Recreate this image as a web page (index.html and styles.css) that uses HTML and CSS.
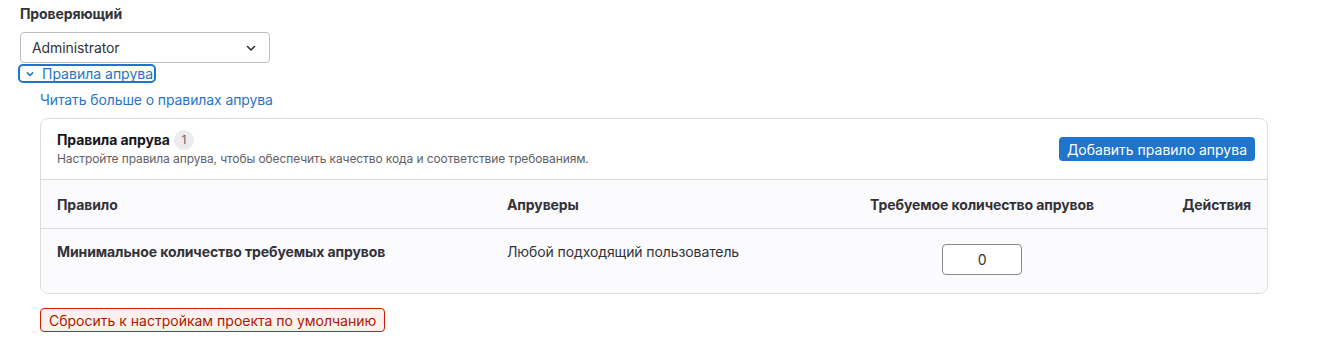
FILE: index.html
```html
<!DOCTYPE html>
<html lang="ru">
<head>
<meta charset="utf-8">
<link rel="stylesheet" href="styles.css">
</head>
<body>
<div class="page">
  <div class="field-label">Проверяющий</div>
  <div class="select">
    <span>Administrator</span>
    <svg class="sel-chev" width="16" height="16" viewBox="0 0 16 16"><path d="M4.5 6.5 8 10l3.5-3.5" fill="none" stroke="#333238" stroke-width="1.6" stroke-linecap="round" stroke-linejoin="round"/></svg>
  </div>
  <button class="toggle">
    <svg width="12" height="12" viewBox="0 0 16 16"><path d="M4.5 6.5 8 10l3.5-3.5" fill="none" stroke="#1f75cb" stroke-width="2" stroke-linecap="round" stroke-linejoin="round"/></svg>
    <span>Правила апрува</span>
  </button>
  <div class="section">
    <a class="more" href="#">Читать больше о правилах апрува</a>
    <div class="card">
      <div class="card-head">
        <div>
          <div class="title">Правила апрува <span class="badge">1</span></div>
          <div class="desc">Настройте правила апрува, чтобы обеспечить качество кода и соответствие требованиям.</div>
        </div>
        <button class="btn-primary">Добавить правило апрува</button>
      </div>
      <div class="grid head-row">
        <div class="c1">Правило</div>
        <div class="c2">Апруверы</div>
        <div class="c3">Требуемое количество апрувов</div>
        <div class="c4">Действия</div>
      </div>
      <div class="grid body-row">
        <div class="c1 strong">Минимальное количество требуемых апрувов</div>
        <div class="c2">Любой подходящий пользователь</div>
        <div class="c3"><div class="num">0</div></div>
        <div class="c4"></div>
      </div>
    </div>
    <button class="btn-reset">Сбросить к настройкам проекта по умолчанию</button>
  </div>
</div>
</body>
</html>
```
FILE: styles.css
```css
* { box-sizing: border-box; }
body {
  margin: 0;
  background: #fff;
  font-family: Inter, "Noto Sans", sans-serif;
  font-size: 14px;
  color: #333238;
  letter-spacing: -0.1px;
}
.page { padding: 4px 20px 0; width: 1288px; }
.field-label { font-weight: 700; line-height: 20px; margin-bottom: 8px; color: #333238; }
.select {
  width: 250px; height: 31px;
  border: 1px solid #bfbfc3; border-radius: 4px;
  display: flex; align-items: center; justify-content: space-between;
  padding: 0 10px 0 11px;
}
.toggle {
  margin: 1px 0 0 -2px;
  display: inline-flex; align-items: center; gap: 6px;
  height: 19px; padding: 0 1px 0 4px;
  border: 2px solid #1f75cb; border-radius: 5px;
  background: #fff; color: #1f75cb;
  font: inherit; font-size: 14px; line-height: 14px;
  vertical-align: top;
}
.section { padding-left: 20px; }
.more { display: block; color: #1f75cb; text-decoration: none; line-height: 20px; margin-top: 7px; margin-bottom: 8px; }
.card { border: 1px solid #dcdcde; border-radius: 8px; overflow: hidden; }
.card-head {
  height: 61px; display: flex; align-items: center; justify-content: space-between;
  padding: 0 12px 0 16px; border-bottom: 1px solid #dcdcde;
}
.title { font-weight: 700; color: #18171d; line-height: 20px; display: flex; align-items: center; gap: 4px; }
.badge {
  display: inline-flex; width: 20px; height: 20px; border-radius: 10px;
  background: #ececef; color: #626168; font-weight: 400; font-size: 12px;
  align-items: center; justify-content: center;
}
.desc { font-size: 12px; color: #626168; line-height: 18px; }
.btn-primary {
  height: 24px; padding: 0 8px; border: 0; border-radius: 4px;
  background: #1f75cb; color: #fff; font: inherit; font-size: 14px;
}
.grid { display: grid; grid-template-columns: 450px 365px 252px 159px; }
.grid > div { padding: 0 16px; }
.head-row { background: #fbfafd; height: 49px; align-items: center; font-weight: 700; color: #333238; border-bottom: 1px solid #dcdcde; white-space: nowrap; }
.head-row .c3 { padding: 0; }
.body-row { background: #fbfafd; height: 64px; padding-top: 13px; }
.strong { font-weight: 700; }
.c3 { text-align: center; }
.c4 { text-align: right; }
.body-row .c1, .body-row .c2 { line-height: 20px; }
.num {
  display: inline-block; width: 80px; height: 31px; margin-top: 2px;
  border: 1px solid #89888d; border-radius: 4px; background: #fff;
  line-height: 29px; text-align: center;
}
.btn-reset {
  margin-top: 14px; height: 24px; padding: 0 8px;
  border: 1px solid #c91c00; border-radius: 4px; background: #fcf1ef;
  color: #ae1800; font: inherit; font-size: 14px;
}
```
